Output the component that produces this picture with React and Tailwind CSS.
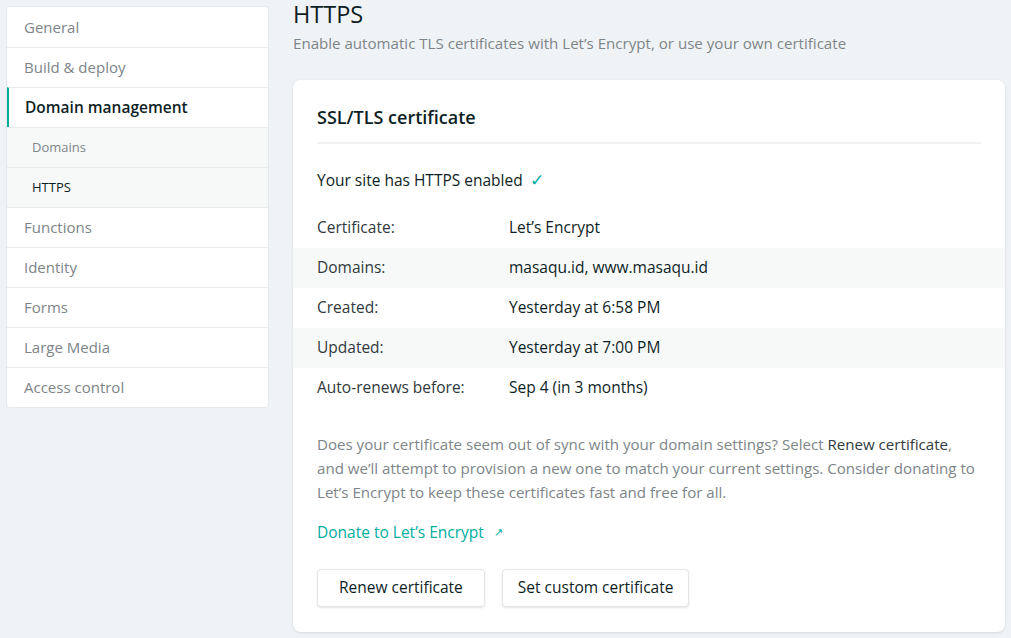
import React from 'react';

const navItems = [
  { label: 'General' },
  { label: 'Build & deploy' },
  { label: 'Domain management', active: true },
  { label: 'Domains', sub: true },
  { label: 'HTTPS', sub: true, current: true },
  { label: 'Functions' },
  { label: 'Identity' },
  { label: 'Forms' },
  { label: 'Large Media' },
  { label: 'Access control' },
];

const details = [
  ['Certificate:', 'Let’s Encrypt'],
  ['Domains:', 'masaqu.id, www.masaqu.id'],
  ['Created:', 'Yesterday at 6:58 PM'],
  ['Updated:', 'Yesterday at 7:00 PM'],
  ['Auto-renews before:', 'Sep 4 (in 3 months)'],
];

function Sidebar() {
  return (
    <nav className="w-[263px] shrink-0 mt-[6px] ml-[6px] self-start bg-white rounded-[4px] border border-[#e6e9eb] overflow-hidden">
      {navItems.map((item, i) => (
        <div
          key={item.label}
          className={
            'h-[40px] flex items-center ' +
            (i > 0 ? 'border-t border-[#e9ebed] ' : '') +
            (item.active
              ? 'border-l-2 border-l-[#00ad9f] pl-[16px] text-[15.5px] font-semibold text-[#0e1e25] '
              : item.sub
              ? 'bg-[#f7f9f9] pl-[25px] text-[13px] ' + (item.current ? 'text-[#0e1e25]' : 'text-[#7d8589]')
              : 'pl-[17px] text-[15px] text-[#7d8589]')
          }
        >
          {item.label}
        </div>
      ))}
    </nav>
  );
}

export default function App() {
  return (
    <div
      className="w-[1011px] h-[638px] overflow-hidden bg-[#f0f3f6] flex text-[#0e1e25]"
      style={{ fontFamily: '"Open Sans", "Noto Sans", Arial, sans-serif' }}
    >
      <Sidebar />

      <main className="ml-[24px] w-[712px] flex flex-col">
        <h1 className="text-[23.5px] leading-[28px] text-[#0e1e25]">HTTPS</h1>
        <p className="text-[15.1px] leading-[24px] mt-[3px] text-[#7d8589]">
          Enable automatic TLS certificates with Let’s Encrypt, or use your own certificate
        </p>

        <section className="mt-[25px] bg-white rounded-[8px] shadow-[0_1px_3px_rgba(14,30,37,0.12)] px-[24px] pt-[23px] pb-[25px]">
          <h2 className="text-[18px] leading-[28px] font-semibold pb-[11px] border-b-2 border-[#f0f2f4]">
            SSL/TLS certificate
          </h2>

          <p className="mt-[24px] text-[15.5px] leading-[24px] font-medium flex items-center">
            Your site has HTTPS enabled
            <span className="ml-[7px] text-[#00ad9f] text-[17px]">✓</span>
          </p>

          <dl className="mt-[16px] -mx-[24px]">
            {details.map(([k, v], i) => (
              <div
                key={k}
                className={'h-[40px] flex items-center px-[24px] text-[15.5px] ' + (i % 2 === 1 ? 'bg-[#f7f9f9]' : '')}
              >
                <dt className="w-[192px] text-[#31393d]">{k}</dt>
                <dd className="text-[#0e1e25] font-medium">{v}</dd>
              </div>
            ))}
          </dl>

          <p className="mt-[24px] text-[15.1px] leading-[24px] text-[#7d8589]">
            Does your certificate seem out of sync with your domain settings? Select{' '}
            <span className="text-[#31393d]">Renew certificate</span>, and we’ll attempt to provision a new one to
            match your current settings. Consider donating to Let’s Encrypt to keep these certificates fast and free
            for all.
          </p>

          <a className="mt-[16px] inline-flex items-center text-[15.5px] leading-[24px] text-[#00ad9f] font-medium">
            Donate to Let’s Encrypt
            <span className="ml-[10px] text-[11px]">↗</span>
          </a>

          <div className="mt-[25px] flex gap-[17px]">
            <button className="h-[38px] px-[21px] bg-white border border-[#e4e7e9] rounded-[4px] shadow-[0_1px_2px_rgba(14,30,37,0.12)] text-[15.5px] text-[#0e1e25] font-medium">
              Renew certificate
            </button>
            <button className="h-[38px] px-[15px] bg-white border border-[#e4e7e9] rounded-[4px] shadow-[0_1px_2px_rgba(14,30,37,0.12)] text-[15.5px] text-[#0e1e25] font-medium">
              Set custom certificate
            </button>
          </div>
        </section>
      </main>
    </div>
  );
}
